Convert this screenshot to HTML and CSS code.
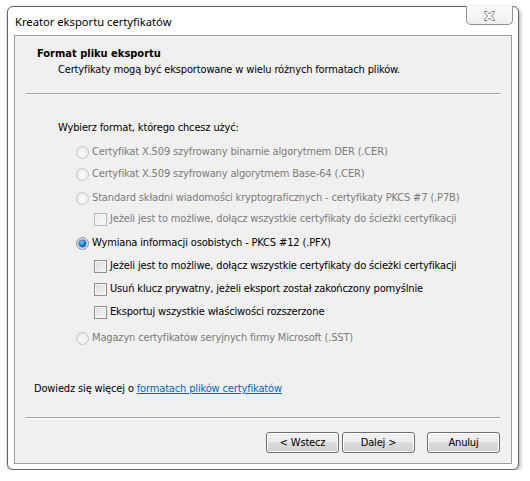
FILE: index.html
```html
<!DOCTYPE html>
<html lang="pl">
<head>
<meta charset="utf-8">
<title>Kreator eksportu certyfikatów</title>
<link rel="stylesheet" href="styles.css">
</head>
<body>
<div class="window">
  <div class="titlebar">
    <span class="title">Kreator eksportu certyfikatów</span>
    <div class="close">
      <svg width="13" height="10" viewBox="0 0 13 10"><path d="M1.5 0.5 L4 0.5 L6.5 3 L9 0.5 L11.5 0.5 L11.5 1.5 L8.5 5 L11.5 8.5 L11.5 9.5 L9 9.5 L6.5 7 L4 9.5 L1.5 9.5 L1.5 8.5 L4.5 5 L1.5 1.5 Z" fill="#fff" stroke="#7d7d7d" stroke-width="1" stroke-linejoin="round"/></svg>
    </div>
  </div>
  <div class="panel">
    <div class="header">
      <div class="h-title">Format pliku eksportu</div>
      <div class="h-sub">Certyfikaty mogą być eksportowane w wielu różnych formatach plików.</div>
    </div>
    <div class="sep"></div>
    <div class="body">
      <div class="prompt">Wybierz format, którego chcesz użyć:</div>
      <div class="opt radio-row disabled g8"><span class="radio"></span>Certyfikat X.509 szyfrowany binarnie algorytmem DER (.CER)</div>
      <div class="opt radio-row disabled g6"><span class="radio"></span>Certyfikat X.509 szyfrowany algorytmem Base-64 (.CER)</div>
      <div class="opt radio-row disabled g8"><span class="radio"></span>Standard składni wiadomości kryptograficznych - certyfikaty PKCS #7 (.P7B)</div>
      <div class="opt check-row disabled g5"><span class="check"></span>Jeżeli jest to możliwe, dołącz wszystkie certyfikaty do ścieżki certyfikacji</div>
      <div class="opt radio-row g8"><span class="radio on"></span>Wymiana informacji osobistych - PKCS #12 (.PFX)</div>
      <div class="opt check-row g7"><span class="check"></span>Jeżeli jest to możliwe, dołącz wszystkie certyfikaty do ścieżki certyfikacji</div>
      <div class="opt check-row g7"><span class="check"></span>Usuń klucz prywatny, jeżeli eksport został zakończony pomyślnie</div>
      <div class="opt check-row g7"><span class="check"></span>Eksportuj wszystkie właściwości rozszerzone</div>
      <div class="opt radio-row disabled g10"><span class="radio"></span>Magazyn certyfikatów seryjnych firmy Microsoft (.SST)</div>
      <div class="more">Dowiedz się więcej o <a href="#" class="link">formatach plików certyfikatów</a></div>
    </div>
    <div class="sep bottom-sep"></div>
    <div class="buttons">
      <button class="btn">&lt; Wstecz</button>
      <button class="btn">Dalej &gt;</button>
      <button class="btn cancel">Anuluj</button>
    </div>
  </div>
</div>
</body>
</html>
```
FILE: styles.css
```css
html, body {
  margin: 0;
  padding: 0;
  background: #ffffff;
}
body {
  font-family: "DejaVu Sans Condensed", "DejaVu Sans", sans-serif;
  font-stretch: condensed;
  font-size: 11px;
  letter-spacing: -0.15px;
  color: #000;
  padding: 6px 0 0 7px;
}
.window {
  position: relative;
  width: 512px;
  height: 464px;
  box-sizing: border-box;
  border: 1px solid #5f6266;
  border-radius: 6px;
  background: #ffffff;
  box-shadow: 1px 2px 4px rgba(0,0,0,0.35);
  display: flex;
  flex-direction: column;
}
.titlebar {
  height: 28px;
  display: flex;
  align-items: center;
  padding-left: 7px;
  box-sizing: border-box;
}
.title {
  font-family: "Noto Sans", "Open Sans", sans-serif;
  font-stretch: normal;
  font-size: 11.2px;
  letter-spacing: 0;
  color: #000;
  margin-top: 1px;
}
.close {
  position: absolute;
  top: -1px;
  right: 5px;
  width: 47px;
  height: 19px;
  box-sizing: border-box;
  border: 1px solid #8f9296;
  border-top: none;
  border-radius: 0 0 5px 5px;
  background: linear-gradient(#fafafa, #f0f0f0);
  display: flex;
  align-items: center;
  justify-content: center;
}
.close svg { display: block; margin-top: 1px; }
.panel {
  flex: 1;
  margin: 0 6px 5px 6px;
  border: 1px solid #9a9da2;
  background: #f0f0f0;
  display: flex;
  flex-direction: column;
}
.header {
  height: 57px;
  box-sizing: border-box;
  padding: 10px 0 0 22px;
}
.h-title {
  font-weight: bold;
  letter-spacing: 0;
  line-height: 15px;
}
.h-sub {
  line-height: 15px;
  margin-top: 1px;
  padding-left: 21px;
}
.sep {
  margin: 0 11px;
  border-top: 1px solid #a0a0a0;
  border-bottom: 1px solid #ffffff;
}
.body {
  padding: 25px 0 0 0;
  height: 322px;
  box-sizing: border-box;
}
.prompt {
  line-height: 16px;
  padding-left: 43px;
}
.opt {
  display: flex;
  align-items: center;
  height: 16px;
  line-height: 16px;
  white-space: nowrap;
}
.radio-row { padding-left: 61px; }
.check-row { padding-left: 79px; }
.g5 { margin-top: 5px; }
.g6 { margin-top: 6px; }
.g7 { margin-top: 7px; }
.g8 { margin-top: 8px; }
.g10 { margin-top: 10px; }
.disabled { color: #7c7c7c; }
.radio {
  width: 13px;
  height: 13px;
  box-sizing: border-box;
  border-radius: 50%;
  border: 1px solid #8e9399;
  background: radial-gradient(circle at 50% 60%, #f4f4f4 0, #e4e4e4 55%, #d6d6d6 100%);
  margin-right: 3px;
  flex: none;
  display: flex;
  align-items: center;
  justify-content: center;
}
.disabled .radio {
  border-color: #c4c6c9;
  background: radial-gradient(circle at 50% 60%, #fbfbfb 0, #eeeeee 60%, #e6e6e6 100%);
}
.radio.on::after {
  content: "";
  width: 7px;
  height: 7px;
  border-radius: 50%;
  background: radial-gradient(circle at 40% 35%, #7fd2ff 0, #1b7bd6 45%, #0c3c8c 100%);
  box-shadow: 0 0 0 0.5px #2a4f8c;
}
.check {
  width: 13px;
  height: 13px;
  box-sizing: border-box;
  border: 1px solid #8e8f8f;
  background: linear-gradient(135deg, #dcdcdc, #f6f6f6);
  box-shadow: inset 0 0 0 1px #f4f4f4;
  margin-right: 3px;
  flex: none;
}
.disabled .check {
  border-color: #b6b9bd;
  background: linear-gradient(135deg, #eeeeee, #fafafa);
}
.more {
  margin-top: 35px;
  padding-left: 19px;
  line-height: 16px;
}
.link {
  color: #0066cc;
  text-decoration: underline;
}
.buttons {
  display: flex;
  justify-content: flex-end;
  padding: 13px 11px 0 0;
}
.btn {
  width: 73px;
  height: 21px;
  box-sizing: border-box;
  border: 1px solid #707070;
  border-radius: 3px;
  background: linear-gradient(#f2f2f2 0, #ebebeb 49%, #dddddd 50%, #cfcfcf 100%);
  box-shadow: inset 0 0 0 1px #fcfcfc;
  font-family: inherit;
  font-stretch: condensed;
  font-size: 11px;
  letter-spacing: -0.15px;
  color: #000;
  padding: 0;
  margin-left: 3px;
}
.btn.cancel { margin-left: 12px; }
```
